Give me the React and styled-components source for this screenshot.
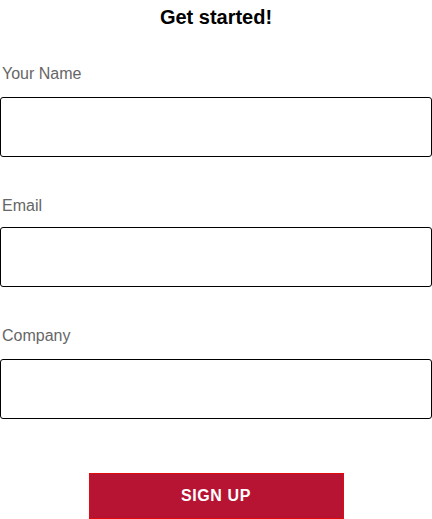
import React from "react";
import styled, { createGlobalStyle } from "styled-components";

const Global = createGlobalStyle`
  html, body { margin: 0; padding: 0; background: #fff; }
  body { font-family: "Liberation Sans", Arial, Helvetica, sans-serif; }
  * { box-sizing: border-box; }
`;

const Form = styled.form`
  width: 432px;
  display: flex;
  flex-direction: column;
  padding-top: 6px;
`;

const Title = styled.h1`
  margin: 0 0 36px;
  font-size: 20px;
  line-height: 23px;
  font-weight: 700;
  text-align: center;
  color: #000;
`;

const Field = styled.div`
  display: flex;
  flex-direction: column;
  margin-bottom: 40px;
`;

const Label = styled.label`
  font-size: 16px;
  line-height: 18px;
  color: #666;
  padding-left: 2px;
  margin-bottom: ${(p) => p.$gap}px;
`;

const Input = styled.input`
  width: 100%;
  height: 60px;
  border: 1px solid #000;
  border-radius: 3px;
  background: #fff;
  font: inherit;
  padding: 0 10px;
  outline: none;
`;

const Button = styled.button`
  align-self: center;
  width: 255px;
  height: 46px;
  margin-top: 14px;
  background: #b71434;
  border: 1px solid #e3090f;
  color: #fff;
  font-family: "Liberation Sans", Arial, sans-serif;
  font-weight: 700;
  font-size: 16px;
  letter-spacing: 0.6px;
  text-transform: uppercase;
  cursor: pointer;
`;

const fields = [
  { id: "name", label: "Your Name", type: "text", gap: 14 },
  { id: "email", label: "Email", type: "email", gap: 12 },
  { id: "company", label: "Company", type: "text", gap: 14 },
];

export default function App() {
  return (
    <>
      <Global />
      <Form onSubmit={(e) => e.preventDefault()}>
        <Title>Get started!</Title>
        {fields.map((f) => (
          <Field key={f.id}>
            <Label htmlFor={f.id} $gap={f.gap}>{f.label}</Label>
            <Input id={f.id} type={f.type} />
          </Field>
        ))}
        <Button type="submit">Sign Up</Button>
      </Form>
    </>
  );
}
